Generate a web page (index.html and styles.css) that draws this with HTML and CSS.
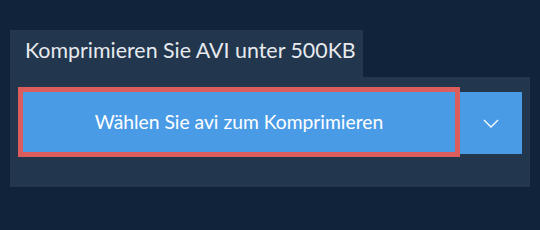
FILE: index.html
```html
<!DOCTYPE html>
<html lang="de">
<head>
    <meta charset="UTF-8">
    <meta name="viewport" content="width=device-width, initial-scale=1.0">
    <title>AVI komprimieren</title>
    <link rel="stylesheet" href="styles.css">
</head>
<body>
    <div class="compressor">
        <div class="tab">Komprimieren Sie AVI unter 500KB</div>
        <div class="panel">
            <button class="choose">Wählen Sie avi zum Komprimieren</button>
            <button class="more">
                <svg viewBox="0 0 16 9" width="16" height="9">
                    <polyline points="1,1 8,8 15,1" />
                </svg>
            </button>
        </div>
    </div>
</body>
</html>
```

FILE: styles.css
```css
body {
    margin: 0;
    background: #11233a;
    font-family: Lato, "Open Sans", sans-serif;
    width: 540px;
    height: 230px;
}

.compressor {
    padding: 30px 10px 0 10px;
}

.tab {
    width: 353px;
    height: 47px;
    box-sizing: border-box;
    padding: 7px 0 0 15px;
    background: #22364d;
    color: #e6eaee;
    font-size: 21.4px;
}

.panel {
    display: flex;
    align-items: flex-start;
    background: #22364d;
    padding: 10px 8px 30px 8px;
}

button {
    border: none;
    font-family: inherit;
    color: #fff;
    background: #4a9be6;
    cursor: pointer;
}

.choose {
    width: 442px;
    height: 70px;
    border: 5px solid #dc5d5d;
    font-size: 19.3px;
    padding: 0 0 2px 0;
}

.more {
    width: 62px;
    height: 62px;
    margin-top: 5px;
    display: flex;
    align-items: center;
    justify-content: center;
}

.more polyline {
    fill: none;
    stroke: #fff;
    stroke-width: 1.3;
}
```
